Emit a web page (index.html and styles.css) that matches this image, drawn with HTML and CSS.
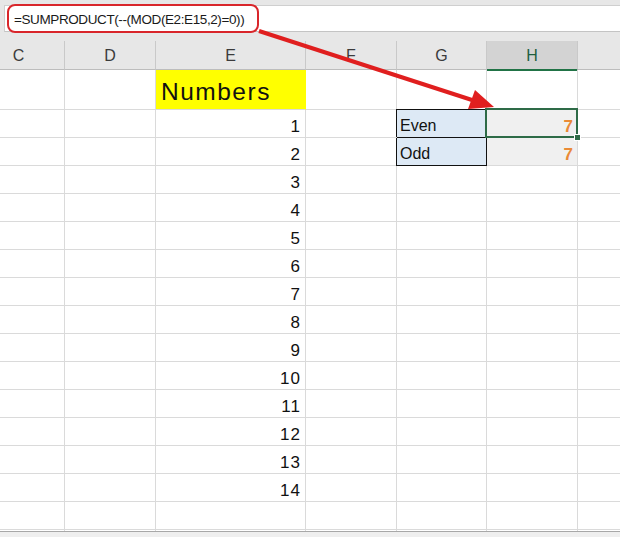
FILE: index.html
```html
<!DOCTYPE html>
<html lang="en">
<head>
<meta charset="utf-8">
<title>Count even and odd numbers</title>
<link rel="stylesheet" href="styles.css">
</head>
<body>
<div class="app">
  <div class="toolbar">
    <div class="formula-bar"><span class="formula">=SUMPRODUCT(--(MOD(E2:E15,2)=0))</span></div>
  </div>

  <div class="sheet">
    <div class="heads">
      <div class="head">C</div>
      <div class="head">D</div>
      <div class="head">E</div>
      <div class="head">F</div>
      <div class="head">G</div>
      <div class="head head-active">H</div>
      <div class="head"></div>
    </div>

    <div class="cells">
      <!-- row 1 -->
      <div class="cell"></div><div class="cell"></div>
      <div class="cell title">Numbers</div>
      <div class="cell"></div><div class="cell"></div><div class="cell"></div><div class="cell"></div>
      <!-- row 2 -->
      <div class="cell"></div><div class="cell"></div>
      <div class="cell num">1</div>
      <div class="cell"></div>
      <div class="cell label label-first">Even</div>
      <div class="cell result selected">7</div>
      <div class="cell"></div>
      <!-- row 3 -->
      <div class="cell"></div><div class="cell"></div>
      <div class="cell num">2</div>
      <div class="cell"></div>
      <div class="cell label">Odd</div>
      <div class="cell result">7</div>
      <div class="cell"></div>
      <!-- rows 4 to 15 -->
      <div class="cell"></div><div class="cell"></div><div class="cell num">3</div><div class="cell"></div><div class="cell"></div><div class="cell"></div><div class="cell"></div>
      <div class="cell"></div><div class="cell"></div><div class="cell num">4</div><div class="cell"></div><div class="cell"></div><div class="cell"></div><div class="cell"></div>
      <div class="cell"></div><div class="cell"></div><div class="cell num">5</div><div class="cell"></div><div class="cell"></div><div class="cell"></div><div class="cell"></div>
      <div class="cell"></div><div class="cell"></div><div class="cell num">6</div><div class="cell"></div><div class="cell"></div><div class="cell"></div><div class="cell"></div>
      <div class="cell"></div><div class="cell"></div><div class="cell num">7</div><div class="cell"></div><div class="cell"></div><div class="cell"></div><div class="cell"></div>
      <div class="cell"></div><div class="cell"></div><div class="cell num">8</div><div class="cell"></div><div class="cell"></div><div class="cell"></div><div class="cell"></div>
      <div class="cell"></div><div class="cell"></div><div class="cell num">9</div><div class="cell"></div><div class="cell"></div><div class="cell"></div><div class="cell"></div>
      <div class="cell"></div><div class="cell"></div><div class="cell num">10</div><div class="cell"></div><div class="cell"></div><div class="cell"></div><div class="cell"></div>
      <div class="cell"></div><div class="cell"></div><div class="cell num">11</div><div class="cell"></div><div class="cell"></div><div class="cell"></div><div class="cell"></div>
      <div class="cell"></div><div class="cell"></div><div class="cell num">12</div><div class="cell"></div><div class="cell"></div><div class="cell"></div><div class="cell"></div>
      <div class="cell"></div><div class="cell"></div><div class="cell num">13</div><div class="cell"></div><div class="cell"></div><div class="cell"></div><div class="cell"></div>
      <div class="cell"></div><div class="cell"></div><div class="cell num">14</div><div class="cell"></div><div class="cell"></div><div class="cell"></div><div class="cell"></div>
      <!-- rows 16 and 17 -->
      <div class="cell"></div><div class="cell"></div><div class="cell"></div><div class="cell"></div><div class="cell"></div><div class="cell"></div><div class="cell"></div>
      <div class="cell"></div><div class="cell"></div><div class="cell"></div><div class="cell"></div><div class="cell"></div><div class="cell"></div><div class="cell"></div>
    </div>
  </div>

  <div class="sheet-tabs"></div>

  <!-- red callout: box round the formula and an arrow to the result cell -->
  <svg class="callout" width="620" height="537" viewBox="0 0 620 537" aria-hidden="true">
    <rect x="8" y="5" width="250" height="27" rx="7" ry="7" fill="none" stroke="#d9262b" stroke-width="2"/>
    <line x1="259" y1="31" x2="472" y2="100" stroke="#e01f1f" stroke-width="4"/>
    <polygon points="494,107 468,109 475,90" fill="#e01f1f"/>
  </svg>
</div>
</body>
</html>
```

FILE: styles.css
```css
html, body {
  margin: 0;
  padding: 0;
  background: #ffffff;
}

.app {
  position: relative;
  width: 620px;
  height: 537px;
  overflow: hidden;
  font-family: "Liberation Sans", Arial, sans-serif;
  color: #111;
}

/* formula bar strip */
.toolbar {
  height: 41px;
  box-sizing: border-box;
  padding-top: 5px;
  background: #e7e7e7;
}

.formula-bar {
  height: 27px;
  margin-left: 4px;
  box-sizing: border-box;
  background: #ffffff;
  border-top: 1px solid #cfcfcf;
  border-left: 1px solid #cfcfcf;
  border-bottom: 1px solid #c4c4c4;
  display: flex;
  align-items: center;
  padding-left: 9px;
}

.formula {
  font-size: 13.5px;
  letter-spacing: -0.4px;
  color: #1a1a1a;
  padding-top: 1px;
}

/* worksheet */
.sheet {
  height: 490px;
  overflow: hidden;
}

.heads,
.cells {
  display: grid;
  grid-template-columns: 92px 91px 150px 91px 90px 91px 91px;
  margin-left: -27px;
}

.heads {
  height: 29px;
  background: #e7e7e7;
}

.head {
  box-sizing: border-box;
  border-right: 1px solid #c9c9c9;
  border-bottom: 1px solid #bdbdbd;
  display: flex;
  align-items: center;
  justify-content: center;
  font-size: 16px;
  color: #3b3b3b;
  padding-top: 1px;
}

.head-active {
  background: #d3d3d3;
  color: #1f5f3f;
  border-bottom: 2px solid #217346;
  margin-bottom: -1px;
}

.cells {
  grid-template-rows: 40px repeat(16, 28px);
}

.cell {
  position: relative;
  box-sizing: border-box;
  border-right: 1px solid #dadada;
  border-bottom: 1px solid #dadada;
  display: flex;
  align-items: flex-end;
  font-size: 16px;
  line-height: 1;
  padding: 0 4px 3px 4px;
}

.title {
  background: #ffff00;
  border-right-color: #ffff00;
  font-size: 24.5px;
  letter-spacing: 1.5px;
  padding-left: 5px;
  padding-bottom: 5px;
}

.num {
  justify-content: flex-end;
  font-size: 17px;
  letter-spacing: 1px;
  padding-right: 4px;
  padding-bottom: 2px;
}

.label {
  background: #dde9f5;
  border-right: 1px solid #111;
  border-bottom: 1px solid #111;
  box-shadow: -1px 0 0 #111;
  padding-left: 3px;
}

.label-first {
  box-shadow: -1px -1px 0 #111;
}

.result {
  background: #f0f0f0;
  justify-content: flex-end;
  font-weight: bold;
  font-size: 17px;
  color: #ea8a36;
  padding-right: 4px;
  padding-bottom: 2px;
}

/* active cell frame with its fill handle */
.selected::after {
  content: "";
  position: absolute;
  top: -2px;
  left: -2px;
  right: -1px;
  bottom: -1px;
  border: 2px solid #2e6b47;
}

.selected::before {
  content: "";
  position: absolute;
  right: -4px;
  bottom: -4px;
  width: 5px;
  height: 5px;
  background: #2e6b47;
  border: 1px solid #ffffff;
  z-index: 1;
}

.sheet-tabs {
  height: 6px;
  background: #efefef;
  border-top: 1px solid #a8a8a8;
}

.callout {
  position: absolute;
  left: 0;
  top: 0;
  pointer-events: none;
}
```
